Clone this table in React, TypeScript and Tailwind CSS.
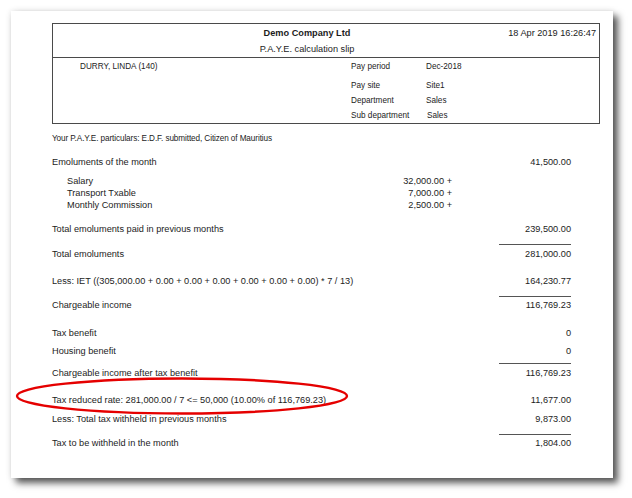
import React from "react";

const font = { fontFamily: '"Liberation Sans", Arial, sans-serif' };

function Row({
  label,
  mid,
  right,
  line,
  pt,
  indent,
  className,
}: {
  label: string;
  mid?: string;
  right?: string;
  line?: boolean;
  pt?: string;
  indent?: boolean;
  className?: string;
}) {
  return (
    <div className={"flex items-end w-[519px] leading-[12px] " + (className ?? "")}>
      <div className={"flex-1 whitespace-nowrap " + (indent ? "pl-[15px]" : "")}>{label}</div>
      <div className="w-[130px] text-right whitespace-nowrap">{mid ?? ""}</div>
      <div className="w-[119px] flex justify-end">
        <div
          className={
            "w-[72px] text-right whitespace-nowrap " +
            (line ? "border-t border-[#555] " : "") +
            (pt ?? "")
          }
        >
          {right ?? ""}
        </div>
      </div>
    </div>
  );
}

export default function App() {
  return (
    <div className="w-[632px] h-[498px] bg-white overflow-hidden" style={font}>
      <div className="relative ml-[11px] mt-[11px] w-[602px] h-[467px] bg-white shadow-[5px_5px_7px_rgba(0,0,0,0.65),0_0_6px_rgba(0,0,0,0.12)] text-[#1c1c1c]">
        <div className="pl-[41px] pt-[12px]">
          {/* header box */}
          <div className="w-[548px] h-[101px] border border-[#4a4a4a] flex flex-col">
            <div className="grid h-[34px] border-b border-[#4a4a4a]">
              <div className="col-start-1 row-start-1 pr-[38px] text-center text-[9.2px] leading-[10px] pt-[4px]">
                <div className="font-bold">Demo Company Ltd</div>
                <div className="mt-[6px]">P.A.Y.E. calculation slip</div>
              </div>
              <div className="col-start-1 row-start-1 text-right pr-[3px] text-[9.2px] leading-[10px] pt-[4px]">
                18 Apr 2019 16:26:47
              </div>
            </div>
            <div className="flex text-[8.2px] leading-[10px] pt-[4px] pl-[27px]">
              <div className="w-[271px]">DURRY, LINDA (140)</div>
              <div className="flex flex-col">
                <div className="flex">
                  <div className="w-[75px]">Pay period</div>
                  <div>Dec-2018</div>
                </div>
                <div className="flex mt-[9px]">
                  <div className="w-[75px]">Pay site</div>
                  <div>Site1</div>
                </div>
                <div className="flex mt-[5px]">
                  <div className="w-[75px]">Department</div>
                  <div>Sales</div>
                </div>
                <div className="flex mt-[5px]">
                  <div className="w-[76px]">Sub department</div>
                  <div>Sales</div>
                </div>
              </div>
            </div>
          </div>

          <div className="mt-[10px] text-[8.2px] leading-[10px] tracking-[-0.1px]">
            Your P.A.Y.E. particulars: E.D.F. submitted, Citizen of Mauritius
          </div>

          <div className="text-[9.2px]">
            <Row className="mt-[12px]" label="Emoluments of the month" right="41,500.00" />
            <Row className="mt-[7px]" indent label="Salary" mid="32,000.00 +" />
            <Row indent label="Transport Txable" mid="7,000.00 +" />
            <Row indent label="Monthly Commission" mid="2,500.00 +" />
            <Row className="mt-[12px]" label="Total emoluments paid in previous months" right="239,500.00" />
            <Row className="mt-[9px]" label="Total emoluments" right="281,000.00" line pt="pt-[3px]" />
            <Row
              className="mt-[15px]"
              label="Less: IET ((305,000.00 + 0.00 + 0.00 + 0.00 + 0.00 + 0.00 + 0.00) * 7 / 13)"
              right="164,230.77"
            />
            <Row className="mt-[9px]" label="Chargeable income" right="116,769.23" line pt="pt-[2px]" />
            <Row className="mt-[16px]" label="Tax benefit" right="0" />
            <Row className="mt-[6px]" label="Housing benefit" right="0" />
            <Row className="mt-[6px]" label="Chargeable income after tax benefit" right="116,769.23" line pt="pt-[3px]" />
            <Row
              className="mt-[15px]"
              label="Tax reduced rate: 281,000.00 / 7 <= 50,000 (10.00% of 116,769.23)"
              right="11,677.00"
            />
            <Row className="mt-[7px]" label="Less: Total tax withheld in previous months" right="9,873.00" />
            <Row className="mt-[9px]" label="Tax to be withheld in the month" right="1,804.00" line pt="pt-[2px]" />
          </div>
        </div>

        {/* red annotation ellipse */}
        <svg
          className="absolute left-0 top-0 pointer-events-none"
          width="602"
          height="467"
          viewBox="0 0 602 467"
        >
          <ellipse
            cx="171"
            cy="385"
            rx="165"
            ry="17.5"
            fill="none"
            stroke="#e50000"
            strokeWidth="2.4"
          />
        </svg>
      </div>
    </div>
  );
}
